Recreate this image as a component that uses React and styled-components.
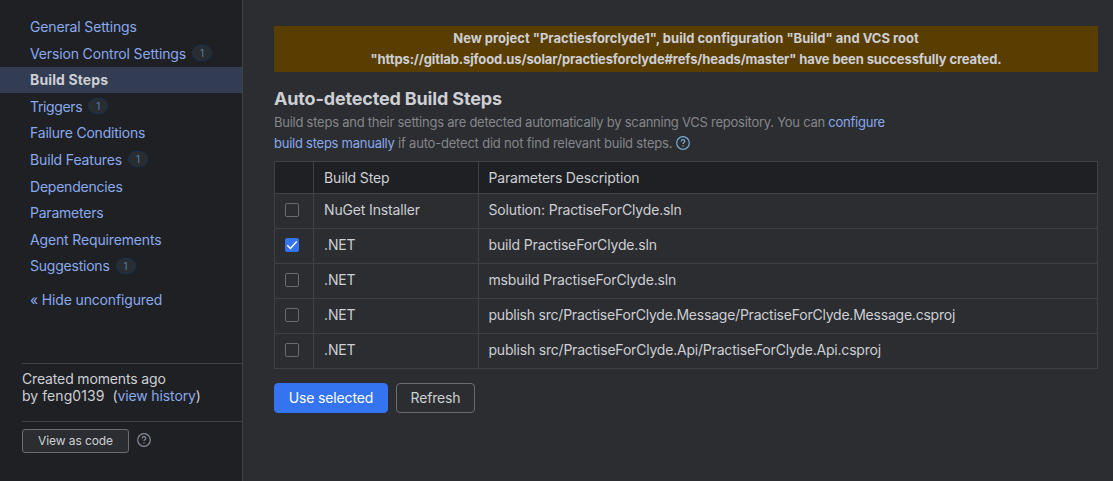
import React from "react";
import styled, { createGlobalStyle, css } from "styled-components";

const Global = createGlobalStyle`
  *, *::before, *::after { box-sizing: border-box; }
  body {
    margin: 0;
    background: #2b2d30;
    color: #cdcfd4;
    font-family: Inter, "Liberation Sans", sans-serif;
    font-size: 14px;
    letter-spacing: -0.15px;
    -webkit-font-smoothing: antialiased;
  }
`;

const Page = styled.div`
  display: flex;
  height: 481px;
  overflow: hidden;
`;

const Sidebar = styled.aside`
  display: flex;
  flex-direction: column;
  width: 243px;
  flex: none;
  padding-top: 13.4px;
  background: #1f2023;
  border-right: 1px solid #3f4146;
`;

const NavItem = styled.a`
  display: flex;
  align-items: center;
  height: 26.6px;
  padding: 0 0 0.4px 30px;
  color: #88a9ee;
  white-space: nowrap;
  ${(p) =>
    p.$active &&
    css`
      background: #323c52;
      color: #cdcfd4;
      font-weight: 700;
    `}
`;

const Tracked = styled.span`
  letter-spacing: ${(p) => p.$by ?? -0.15}px;
`;

const Count = styled.span`
  display: grid;
  place-items: center;
  width: 20px;
  height: 16px;
  margin-left: 6px;
  border: 1px solid #163354;
  border-radius: 8px;
  background: #2a2c2f;
  color: #4a86b8;
  font-size: 10px;
  letter-spacing: 0;
`;

const HideLink = styled.a`
  margin: 7.4px 0 0 30px;
  line-height: 26px;
  color: #88a9ee;
`;

const SideFooter = styled.div`
  margin: auto 0 0 22px;
  height: 118px;
`;

const Created = styled.div`
  height: 58px;
  padding-top: 6px;
  border-top: 1px solid #3f4146;
  line-height: 17px;
`;

const CodeRow = styled.div`
  display: flex;
  align-items: center;
  gap: 8px;
  padding-top: 7px;
  border-top: 1px solid #3f4146;
  svg { margin-bottom: 2px; }
`;

const Link = styled.a`
  color: #88a9ee;
`;

const Button = styled.button`
  width: ${(p) => p.$width}px;
  height: ${(p) => (p.$small ? 24 : 30)}px;
  padding: 0 0 2px;
  border: 1px solid ${(p) => (p.$primary ? "#3574f0" : "#6a6d75")};
  border-radius: ${(p) => (p.$small ? 3 : 4)}px;
  background: ${(p) => (p.$primary ? "#3574f0" : "#2b2d30")};
  color: ${(p) => (p.$primary ? "#ffffff" : "#cdcfd4")};
  font-family: inherit;
  font-size: ${(p) => (p.$small ? 12 : 14)}px;
  letter-spacing: ${(p) => (p.$small ? -0.08 : -0.15)}px;
`;

const Main = styled.main`
  flex: 1;
  padding: 26px 15px 0 31px;
`;

const Notice = styled.div`
  height: 46px;
  padding-top: 2px;
  background: #593d01;
  text-align: center;
  font-size: 13px;
  font-weight: 700;
  line-height: 21px;
`;

const Title = styled.h2`
  margin: 15px 0 0;
  font-size: 18px;
  font-weight: 700;
  line-height: 24px;
  letter-spacing: -0.16px;
`;

const Description = styled.p`
  margin: 1px 0 7px;
  color: #85868a;
  font-size: 13px;
  line-height: 21px;
  letter-spacing: -0.25px;
`;

const HelpSvg = styled.svg`
  display: inline-block;
  vertical-align: -2px;
  flex: none;
  margin-left: ${(p) => (p.$inline ? 4 : 0)}px;
`;

const Table = styled.table`
  width: 824px;
  border-collapse: collapse;
  table-layout: fixed;
  th, td {
    height: 35px;
    padding: 0 0 3px 10px;
    border: 1px solid #3f4146;
    text-align: left;
    font-weight: 400;
  }
  td:first-child { padding-bottom: 2px; }
  th:last-child, td:last-child { padding-left: 9.5px; }
  th {
    height: 32px;
    padding-bottom: 0;
    background: #1f2023;
  }
`;

const Box = styled.span`
  display: block;
  width: 14px;
  height: 14px;
  border: 1px solid ${(p) => (p.$checked ? "#3574f0" : "#696b70")};
  border-radius: 2px;
  background: ${(p) => (p.$checked ? "#3574f0" : "transparent")};
  svg { display: block; }
`;

const Actions = styled.div`
  display: flex;
  gap: 8px;
  margin-top: 14px;
`;

const NAV = [
  { label: "General Settings" },
  { label: "Version Control Settings", count: 1 },
  { label: "Build Steps", active: true, tracking: 0.12 },
  { label: "Triggers", count: 1, tracking: -0.35 },
  { label: "Failure Conditions", tracking: -0.2 },
  { label: "Build Features", count: 1 },
  { label: "Dependencies", tracking: -0.22 },
  { label: "Parameters", tracking: -0.22 },
  { label: "Agent Requirements" },
  { label: "Suggestions", count: 1, tracking: -0.22 },
];

const STEPS = [
  { step: "NuGet Installer", params: "Solution: PractiseForClyde.sln" },
  { step: ".NET", params: "build PractiseForClyde.sln", checked: true },
  { step: ".NET", params: "msbuild PractiseForClyde.sln" },
  {
    step: ".NET",
    params: "publish src/PractiseForClyde.Message/PractiseForClyde.Message.csproj",
    tracking: -0.22,
  },
  {
    step: ".NET",
    params: "publish src/PractiseForClyde.Api/PractiseForClyde.Api.csproj",
    tracking: -0.2,
  },
];

function Help({ color, inline }) {
  return (
    <HelpSvg $inline={inline} width="14" height="14" viewBox="0 0 14 14" fill="none" stroke={color} strokeWidth="1.2">
      <circle cx="7" cy="7" r="6.3" />
      <path d="M5.2 5.4C5.2 4.3 5.9 3.7 7 3.7s1.8.6 1.8 1.5c0 1.3-1.8 1.3-1.8 2.8" />
      <path d="M7 9.2v1.3" />
    </HelpSvg>
  );
}

export default function App() {
  return (
    <>
      <Global />
      <Page>
        <Sidebar>
          {NAV.map(({ label, count, active, tracking }) => (
            <NavItem key={label} $active={active}>
              <Tracked $by={tracking}>{label}</Tracked>
              {count && <Count>{count}</Count>}
            </NavItem>
          ))}
          <HideLink>« Hide unconfigured</HideLink>
          <SideFooter>
            <Created>
              Created moments ago
              <br />
              <Tracked $by={0.06}>by feng0139&nbsp; </Tracked>
              <Tracked $by={-0.12}>
                (<Link>view history</Link>)
              </Tracked>
            </Created>
            <CodeRow>
              <Button $small $width={107}>View as code</Button>
              <Help color="#858a99" />
            </CodeRow>
          </SideFooter>
        </Sidebar>
        <Main>
          <Notice>
            <Tracked $by={0}>
              New project "Practiesforclyde1", build configuration "Build" and VCS root
            </Tracked>
            <br />
            <Tracked $by={-0.12}>
              "https://gitlab.sjfood.us/solar/practiesforclyde#refs/heads/master" have been successfully created.
            </Tracked>
          </Notice>
          <Title>Auto-detected Build Steps</Title>
          <Description>
            Build steps and their settings are detected automatically by scanning VCS repository. You can{" "}
            <Link>
              configure
              <br />
              build steps manually
            </Link>{" "}
            <Tracked $by={-0.2}>if auto-detect did not find relevant build steps.</Tracked>
            <Help color="#78add2" inline />
          </Description>
          <Table>
            <colgroup>
              <col style={{ width: 39 }} />
              <col style={{ width: 165 }} />
              <col />
            </colgroup>
            <thead>
              <tr>
                <th />
                <th>Build Step</th>
                <th>
                  <Tracked $by={-0.2}>Parameters Description</Tracked>
                </th>
              </tr>
            </thead>
            <tbody>
              {STEPS.map(({ step, params, checked, tracking }) => (
                <tr key={params}>
                  <td>
                    <Box $checked={checked}>
                      {checked && (
                        <svg width="12" height="12" viewBox="0 0 12 12" fill="none" stroke="#fff" strokeWidth="1.4">
                          <path d="M1.3 6.2 4.4 9.4 10.7 2.6" />
                        </svg>
                      )}
                    </Box>
                  </td>
                  <td>{step}</td>
                  <td>
                    <Tracked $by={tracking}>{params}</Tracked>
                  </td>
                </tr>
              ))}
            </tbody>
          </Table>
          <Actions>
            <Button $primary $width={114}>Use selected</Button>
            <Button $width={79}>Refresh</Button>
          </Actions>
        </Main>
      </Page>
    </>
  );
}
